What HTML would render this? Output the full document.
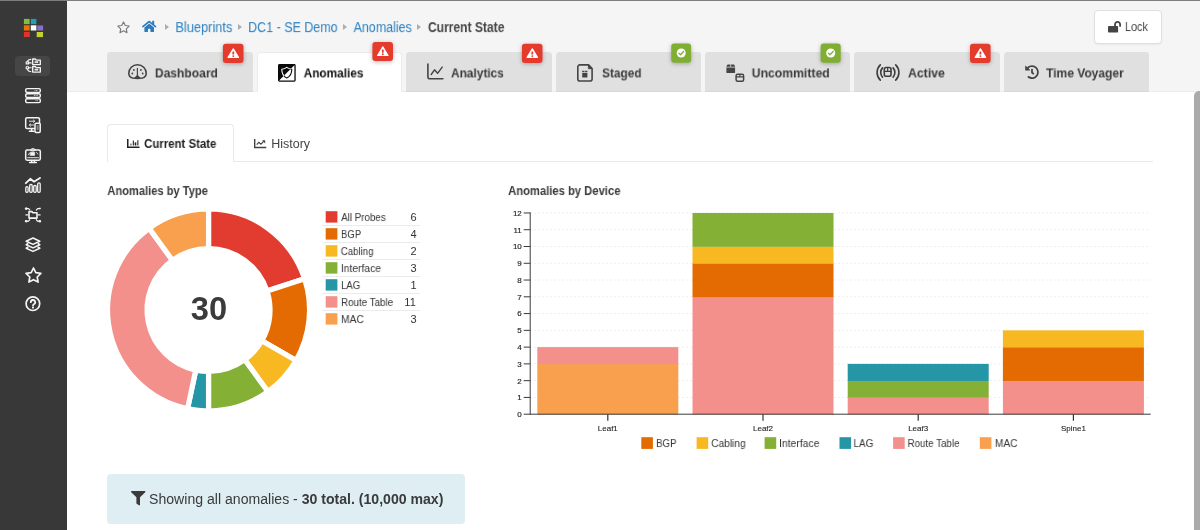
<!DOCTYPE html>
<html>
<head>
<meta charset="utf-8">
<title>Anomalies</title>
<style>
*{box-sizing:border-box;margin:0;padding:0}
html,body{width:1200px;height:530px;overflow:hidden;background:#fff;font-family:"Liberation Sans",sans-serif;color:#444}
.abs{position:absolute}
svg{position:absolute;overflow:visible;will-change:transform}
#topline{left:0;top:0;width:1200px;height:1px;background:#7e7e7e;z-index:50}
#side{left:0;top:0;width:67px;height:530px;background:#383838}
#head{left:67px;top:0;width:1133px;height:92px;background:#f5f5f5;border-bottom:1px solid #ebebeb}
#main{left:67px;top:92px;width:1133px;height:438px;background:#fff}
#scroll{left:1194.100px;top:91.4px;width:6px;height:438.6px;background:#ababab;border-top-left-radius:5px}
.t{position:absolute;white-space:nowrap;line-height:1;will-change:transform}
.bcarrow{position:absolute;top:24px;width:0;height:0;border-left:4px solid #adadad;border-top:3.5px solid transparent;border-bottom:3.5px solid transparent}
.tab{position:absolute;top:51.7px;height:40.3px;border-bottom:1px solid #d8d8d8;width:145.3px;background:#e0e0e0;border-radius:3.5px 3.5px 0 0}
.tab.active{background:#fff;height:40.3px;border:1px solid #ebebeb;border-bottom:none}
.badge{position:absolute;top:43.6px;width:20.7px;height:19.3px;border-radius:3px;box-shadow:0 2px 4px rgba(0,0,0,.25)}
.badge.r{background:#e43b2d}
.badge.g{background:#7fae33}
#lock{left:1094px;top:10px;width:68px;height:34px;background:#fff;border:1px solid #e0e0e0;border-radius:4px;box-shadow:0 1px 2px rgba(0,0,0,.05)}
#subline{left:107px;top:161px;width:1046px;height:1px;background:#e9e9e9}
#subtab{left:107px;top:124px;width:127px;height:38px;background:#fff;border:1px solid #e9e9e9;border-bottom:none;border-radius:4px 4px 0 0}
.sw{position:absolute;width:11px;height:11px}
.lsep{position:absolute;left:322px;width:98px;height:1px;background:#ebebeb}
#info{left:107.300px;top:474.200px;width:357.700px;height:50px;background:#deeef2;border-radius:4px}
</style>
</head>
<body>
<div class="abs" id="side"></div>
<div class="abs" id="head"></div>
<div class="abs" id="main"></div>
<div class="abs" id="scroll"></div>
<div class="abs" id="topline"></div>

<!-- breadcrumb arrows -->
<i class="bcarrow" style="left:165px"></i>
<i class="bcarrow" style="left:238px"></i>
<i class="bcarrow" style="left:343px"></i>
<i class="bcarrow" style="left:417px"></i>

<div class="abs" id="lock"></div>

<!-- tabs -->
<div class="tab" style="left:107.3px;width:145.7px"></div>
<div class="tab active" style="left:257px;width:145.300px"></div>
<div class="tab" style="left:406.4px"></div>
<div class="tab" style="left:555.7px"></div>
<div class="tab" style="left:705px"></div>
<div class="tab" style="left:854.4px"></div>
<div class="tab" style="left:1003.7px"></div>
<svg style="left:0;top:0;filter:drop-shadow(0 1.5px 2px rgba(0,0,0,.28))" width="1200" height="80"><rect x="222.9" y="43.8" width="20.6" height="19.1" rx="3" fill="#e43b2d"/><rect x="372.4" y="42.0" width="20.6" height="19.1" rx="3" fill="#e43b2d"/><rect x="521.9" y="43.8" width="20.6" height="19.1" rx="3" fill="#e43b2d"/><rect x="671.2" y="43.6" width="19.9" height="19.1" rx="3" fill="#7fae33"/><rect x="820.6" y="43.6" width="20.1" height="19.1" rx="3" fill="#7fae33"/><rect x="970" y="43.8" width="20.6" height="19.1" rx="3" fill="#e43b2d"/></svg>

<!-- sub tabs -->
<div class="abs" id="subline"></div>
<div class="abs" id="subtab"></div>

<svg style="left:0;top:0" width="1200" height="530"><path d="M208.55,209.00A101.0,101.0 0 0 1 304.61,278.79L267.04,291.00A61.5,61.5 0 0 0 208.55,248.50Z" fill="#e23b30" stroke="#fff" stroke-width="5.2" stroke-linejoin="miter"/><path d="M304.61,278.79A101.0,101.0 0 0 1 296.02,360.50L261.81,340.75A61.5,61.5 0 0 0 267.04,291.00Z" fill="#e36b02" stroke="#fff" stroke-width="5.2" stroke-linejoin="miter"/><path d="M296.02,360.50A101.0,101.0 0 0 1 267.92,391.71L244.70,359.75A61.5,61.5 0 0 0 261.81,340.75Z" fill="#f8b822" stroke="#fff" stroke-width="5.2" stroke-linejoin="miter"/><path d="M267.92,391.71A101.0,101.0 0 0 1 208.55,411.00L208.55,371.50A61.5,61.5 0 0 0 244.70,359.75Z" fill="#84b036" stroke="#fff" stroke-width="5.2" stroke-linejoin="miter"/><path d="M208.55,411.00A101.0,101.0 0 0 1 187.55,408.79L195.76,370.16A61.5,61.5 0 0 0 208.55,371.50Z" fill="#2596a5" stroke="#fff" stroke-width="5.2" stroke-linejoin="miter"/><path d="M187.55,408.79A101.0,101.0 0 0 1 149.18,228.29L172.40,260.25A61.5,61.5 0 0 0 195.76,370.16Z" fill="#f3908b" stroke="#fff" stroke-width="5.2" stroke-linejoin="miter"/><path d="M149.18,228.29A101.0,101.0 0 0 1 208.55,209.00L208.55,248.50A61.5,61.5 0 0 0 172.40,260.25Z" fill="#f9a04f" stroke="#fff" stroke-width="5.2" stroke-linejoin="miter"/></svg>
<svg style="left:0;top:0" width="1200" height="530"><rect x="325.7" y="211.2" width="11.7" height="11.4" fill="#e23b30"/><rect x="325.7" y="228.2" width="11.7" height="11.4" fill="#e36b02"/><rect x="325.7" y="245.2" width="11.7" height="11.4" fill="#f8b822"/><rect x="325.7" y="262.2" width="11.7" height="11.4" fill="#84b036"/><rect x="325.7" y="279.2" width="11.7" height="11.4" fill="#2596a5"/><rect x="325.7" y="296.2" width="11.7" height="11.4" fill="#f3908b"/><rect x="325.7" y="313.2" width="11.7" height="11.4" fill="#f9a04f"/></svg><div class="lsep" style="top:225px"></div><div class="lsep" style="top:242px"></div><div class="lsep" style="top:259px"></div><div class="lsep" style="top:276px"></div><div class="lsep" style="top:293px"></div><div class="lsep" style="top:310px"></div>
<svg style="left:0;top:0" width="1200" height="530" font-family="Liberation Sans, sans-serif" font-size="8" fill="#222" stroke="#222" stroke-width="0"><line x1="530.2" x2="1150.5" y1="397.43" y2="397.43" stroke="#eeeeee" stroke-width="1" stroke-dasharray="2,2"/><line x1="530.2" x2="1150.5" y1="380.66" y2="380.66" stroke="#eeeeee" stroke-width="1" stroke-dasharray="2,2"/><line x1="530.2" x2="1150.5" y1="363.89" y2="363.89" stroke="#eeeeee" stroke-width="1" stroke-dasharray="2,2"/><line x1="530.2" x2="1150.5" y1="347.12" y2="347.12" stroke="#eeeeee" stroke-width="1" stroke-dasharray="2,2"/><line x1="530.2" x2="1150.5" y1="330.35" y2="330.35" stroke="#eeeeee" stroke-width="1" stroke-dasharray="2,2"/><line x1="530.2" x2="1150.5" y1="313.58" y2="313.58" stroke="#eeeeee" stroke-width="1" stroke-dasharray="2,2"/><line x1="530.2" x2="1150.5" y1="296.81" y2="296.81" stroke="#eeeeee" stroke-width="1" stroke-dasharray="2,2"/><line x1="530.2" x2="1150.5" y1="280.04" y2="280.04" stroke="#eeeeee" stroke-width="1" stroke-dasharray="2,2"/><line x1="530.2" x2="1150.5" y1="263.27" y2="263.27" stroke="#eeeeee" stroke-width="1" stroke-dasharray="2,2"/><line x1="530.2" x2="1150.5" y1="246.50" y2="246.50" stroke="#eeeeee" stroke-width="1" stroke-dasharray="2,2"/><line x1="530.2" x2="1150.5" y1="229.73" y2="229.73" stroke="#eeeeee" stroke-width="1" stroke-dasharray="2,2"/><line x1="530.2" x2="1150.5" y1="212.96" y2="212.96" stroke="#eeeeee" stroke-width="1" stroke-dasharray="2,2"/><rect x="537.30" y="363.89" width="141" height="50.61" fill="#f9a04f"/><rect x="537.30" y="347.12" width="141" height="17.07" fill="#f3908b"/><line x1="607.80" x2="607.80" y1="414.2" y2="420.7" stroke="#333" stroke-width="1.2"/><text x="607.80" y="430.7" text-anchor="middle" stroke-width=".1">Leaf1</text><rect x="692.50" y="296.81" width="141" height="117.69" fill="#f3908b"/><rect x="692.50" y="263.27" width="141" height="33.84" fill="#e36b02"/><rect x="692.50" y="246.50" width="141" height="17.07" fill="#f8b822"/><rect x="692.50" y="212.96" width="141" height="33.84" fill="#84b036"/><line x1="763.00" x2="763.00" y1="414.2" y2="420.7" stroke="#333" stroke-width="1.2"/><text x="763.00" y="430.7" text-anchor="middle" stroke-width=".1">Leaf2</text><rect x="847.70" y="397.43" width="141" height="17.07" fill="#f3908b"/><rect x="847.70" y="380.66" width="141" height="17.07" fill="#84b036"/><rect x="847.70" y="363.89" width="141" height="17.07" fill="#2596a5"/><line x1="918.20" x2="918.20" y1="414.2" y2="420.7" stroke="#333" stroke-width="1.2"/><text x="918.20" y="430.7" text-anchor="middle" stroke-width=".1">Leaf3</text><rect x="1002.90" y="380.66" width="141" height="33.84" fill="#f3908b"/><rect x="1002.90" y="347.12" width="141" height="33.84" fill="#e36b02"/><rect x="1002.90" y="330.35" width="141" height="17.07" fill="#f8b822"/><line x1="1073.40" x2="1073.40" y1="414.2" y2="420.7" stroke="#333" stroke-width="1.2"/><text x="1073.40" y="430.7" text-anchor="middle" stroke-width=".1">Spine1</text><line x1="530.2" x2="530.2" y1="212.46" y2="414.7" stroke="#3a3a3a" stroke-width="1"/><line x1="523.7" x2="1150.7" y1="414.2" y2="414.2" stroke="#3a3a3a" stroke-width="1"/><text x="521.8000000000001" y="417.10" text-anchor="end" stroke-width=".15">0</text><line x1="523.7" x2="530.2" y1="397.43" y2="397.43" stroke="#3a3a3a" stroke-width="1"/><text x="521.8000000000001" y="400.33" text-anchor="end" stroke-width=".15">1</text><line x1="523.7" x2="530.2" y1="380.66" y2="380.66" stroke="#3a3a3a" stroke-width="1"/><text x="521.8000000000001" y="383.56" text-anchor="end" stroke-width=".15">2</text><line x1="523.7" x2="530.2" y1="363.89" y2="363.89" stroke="#3a3a3a" stroke-width="1"/><text x="521.8000000000001" y="366.79" text-anchor="end" stroke-width=".15">3</text><line x1="523.7" x2="530.2" y1="347.12" y2="347.12" stroke="#3a3a3a" stroke-width="1"/><text x="521.8000000000001" y="350.02" text-anchor="end" stroke-width=".15">4</text><line x1="523.7" x2="530.2" y1="330.35" y2="330.35" stroke="#3a3a3a" stroke-width="1"/><text x="521.8000000000001" y="333.25" text-anchor="end" stroke-width=".15">5</text><line x1="523.7" x2="530.2" y1="313.58" y2="313.58" stroke="#3a3a3a" stroke-width="1"/><text x="521.8000000000001" y="316.48" text-anchor="end" stroke-width=".15">6</text><line x1="523.7" x2="530.2" y1="296.81" y2="296.81" stroke="#3a3a3a" stroke-width="1"/><text x="521.8000000000001" y="299.71" text-anchor="end" stroke-width=".15">7</text><line x1="523.7" x2="530.2" y1="280.04" y2="280.04" stroke="#3a3a3a" stroke-width="1"/><text x="521.8000000000001" y="282.94" text-anchor="end" stroke-width=".15">8</text><line x1="523.7" x2="530.2" y1="263.27" y2="263.27" stroke="#3a3a3a" stroke-width="1"/><text x="521.8000000000001" y="266.17" text-anchor="end" stroke-width=".15">9</text><line x1="523.7" x2="530.2" y1="246.50" y2="246.50" stroke="#3a3a3a" stroke-width="1"/><text x="521.8000000000001" y="249.40" text-anchor="end" stroke-width=".15">10</text><line x1="523.7" x2="530.2" y1="229.73" y2="229.73" stroke="#3a3a3a" stroke-width="1"/><text x="521.8000000000001" y="232.63" text-anchor="end" stroke-width=".15">11</text><line x1="523.7" x2="530.2" y1="212.96" y2="212.96" stroke="#3a3a3a" stroke-width="1"/><text x="521.8000000000001" y="215.86" text-anchor="end" stroke-width=".15">12</text></svg><svg style="left:0;top:0" width="1200" height="530"><rect x="641.3" y="437.2" width="11.6" height="11.7" fill="#e36b02"/><rect x="696.6" y="437.2" width="11.6" height="11.7" fill="#f8b822"/><rect x="764.6" y="437.2" width="11.6" height="11.7" fill="#84b036"/><rect x="839.5" y="437.2" width="11.6" height="11.7" fill="#2596a5"/><rect x="893.1" y="437.2" width="11.6" height="11.7" fill="#f3908b"/><rect x="979.8" y="437.2" width="11.6" height="11.7" fill="#f9a04f"/></svg>

<div class="abs" id="info"></div>

<!-- logo -->
<svg style="left:0;top:0" width="67" height="50">
<rect x="23.9" y="18.9" width="5.7" height="5.2" fill="#84bd3a"/>
<rect x="30.8" y="18.9" width="5.6" height="5.2" fill="#219fb5"/>
<rect x="23.9" y="25.3" width="5.7" height="5.2" fill="#ef7102"/>
<rect x="30.8" y="25.3" width="5.6" height="5.2" fill="#ffffff"/>
<rect x="37.3" y="25.5" width="5.8" height="5" fill="#8b6fc6"/>
<rect x="23.9" y="32" width="5.9" height="5" fill="#e0332b"/>
<rect x="36.7" y="32" width="6.3" height="5.1" fill="#c2d32e"/>
</svg>
<div class="abs" style="left:15px;top:56px;width:35px;height:20px;border-radius:4px;background:#464646"></div>
<!-- side 1: blueprints -->
<svg style="left:25px;top:58.2px" width="16" height="16" fill="none" stroke="#f4f4f4" stroke-width="1.35" stroke-linejoin="round" stroke-linecap="round">
<path d="M7.700 1h2.500l1 1.100h4.100v4.500H7.700z"/><rect x="10.200" y="3.600" width="2.800" height="1.100" fill="#f4f4f4" stroke-width=".6"/>
<path d="M7.700 8.500h2.500l1 1.100h4.100v4.500H7.700z"/><rect x="10.200" y="11.100" width="2.800" height="1.100" fill="#f4f4f4" stroke-width=".6"/>
<rect x="1.200" y="3.900" width="2.400" height="2" stroke-width="1.100"/><rect x="1.200" y="8.700" width="2.400" height="2" stroke-width="1.100"/>
<path d="M5.900 1.400Q3 1.700 2.400 3.300M5.900 13.800Q3 13.500 2.400 11.500M4.100 4.900h2.100M4.100 9.700h2.100" stroke-width="1.100"/>
</svg>
<!-- side 2: servers -->
<svg style="left:25px;top:88px" width="16" height="16" fill="none" stroke="#f4f4f4" stroke-width="1.45">
<rect x=".7" y=".6" width="14.6" height="3.8" rx="1.4"/><rect x=".7" y="5.7" width="14.6" height="3.8" rx="1.4"/><rect x=".7" y="10.8" width="14.6" height="3.8" rx="1.4"/>
<path d="M9.5 2.5h3.5M9 7.6h4M10.5 12.7h2.5" stroke-width=".8" stroke-dasharray="1,.6"/>
</svg>
<!-- side 3: monitor+phone -->
<svg style="left:25px;top:117.400px" width="16" height="16" fill="none" stroke="#f4f4f4" stroke-width="1.500" stroke-linejoin="round" stroke-linecap="round">
<rect x=".7" y=".7" width="13.800" height="10.900" rx="1.400"/><path d="M6.600 12v2M4.400 14.200h4.400"/>
<path d="M4.400 4.200h5.200M8.400 3l1.300 1.200-1.300 1.200M8.600 8h-4.200M5.600 6.800l-1.300 1.200 1.300 1.200" stroke-width=".9"/>
<rect x="10" y="6.200" width="5.200" height="9.200" rx="1.100" fill="#383838"/><rect x="11.600" y="8.100" width="2" height="4.800" fill="#8a8a8a" stroke="none"/>
</svg>
<!-- side 4: monitor -->
<svg style="left:25px;top:147.600px" width="16" height="16" fill="none" stroke="#f4f4f4" stroke-width="1.500" stroke-linejoin="round" stroke-linecap="round">
<rect x=".7" y="2" width="14.600" height="10.200" rx="1.400"/><path d="M2.600 9.700h10.800" stroke-width=".9"/><path d="M6.600 12.400v1.800M9.400 12.400v1.800M4.600 14.500h6.800"/>
<ellipse cx="8" cy="1.800" rx="2.200" ry="1.200" stroke-width="1"/><rect x="5.300" y="4.200" width="4.400" height="3.200" fill="#f4f4f4" stroke-width=".6"/><path d="M11.600 4.400l1.200 1.700M3.300 6.900l1-1.600" stroke-width=".8"/>
</svg>
<!-- side 5: analytics -->
<svg style="left:25px;top:177.3px" width="16" height="16" fill="none" stroke="#f4f4f4" stroke-width="1.4" stroke-linejoin="round" stroke-linecap="round">
<path d="M.8 6.200L5.300 1.800 9 4.700 15 .9" stroke-width="1.800"/>
<rect x=".8" y="9.600" width="2.300" height="5.700" rx="1.100" stroke-width="1.300"/><rect x="4.700" y="7.500" width="2.500" height="7.800" rx="1.100" stroke-width="1.300"/><rect x="8.700" y="8.500" width="2.500" height="6.800" rx="1.100" stroke-width="1.300"/><rect x="12.700" y="5.900" width="2.500" height="9.400" rx="1.100" stroke-width="1.300"/>
</svg>
<!-- side 6: folder arrows -->
<svg style="left:25px;top:207.2px" width="16" height="16" fill="none" stroke="#f4f4f4" stroke-width="1.200" stroke-linejoin="round" stroke-linecap="round">
<path d="M4 4.600h2.900l1 1.100h4.100v5.400H4z" stroke-width="1.600"/>
<path d="M1 1.600h2.600l1.200 1.300M15 1.600h-2.400l-1.300 1.500M.9 7.900h1.800M15.100 7.900h-1.800M1 14.200h2.600l1.100-1.500M15 14.200h-2.600l-1.100-1.500" />
<circle cx="1.100" cy="1.600" r=".7" fill="#f4f4f4"/><circle cx="14.900" cy="1.400" r=".8" fill="#f4f4f4" stroke="none"/><circle cx="1.100" cy="14.200" r=".7" fill="#f4f4f4"/><circle cx="14.900" cy="14.200" r=".7" fill="#f4f4f4"/>
</svg>
<!-- side 7: layers -->
<svg style="left:25px;top:237px" width="16" height="16" fill="none" stroke="#f4f4f4" stroke-width="1.600" stroke-linejoin="round" stroke-linecap="round">
<path d="M8 1l6.800 3.200L8 7.400 1.200 4.200z"/><path d="M2.800 6.800L1.200 7.700 8 10.900l6.800-3.200-1.600-.9"/><path d="M2.800 10.300l-1.600.9L8 14.400l6.800-3.200-1.600-.9"/>
</svg>
<!-- side 8: star -->
<svg style="left:24.600px;top:267px" width="17" height="16" fill="none" stroke="#f4f4f4" stroke-width="1.700" stroke-linejoin="round">
<path d="M8.500 1l2.300 4.700 5.100.7-3.700 3.600.9 5.100-4.600-2.400-4.600 2.400.9-5.100L1.100 6.400l5.100-.7z"/>
</svg>
<!-- side 9: help -->
<svg style="left:25px;top:295.500px" width="16" height="16" fill="none" stroke="#f4f4f4" stroke-width="1.700">
<circle cx="7.900" cy="7.700" r="6.800"/>
<path d="M5.800 6.200a2.200 2.200 0 1 1 3.100 2c-.7.400-.9.700-.9 1.300" stroke-width="1.800" stroke-linecap="round"/><circle cx="8" cy="11.600" r="1.050" fill="#f4f4f4" stroke="none"/>
</svg>
<!-- breadcrumb star -->
<svg style="left:116.6px;top:21.4px" width="13" height="12.5" viewBox="0 0 13 12.5" fill="none" stroke="#7a7a7a" stroke-width="1.15" stroke-linejoin="round">
<path d="M6.5 .9l1.75 3.6 3.9.55-2.85 2.75.7 3.9L6.5 9.85 3 11.7l.7-3.9L.85 5.05l3.9-.55z"/>
</svg>
<!-- home -->
<svg style="left:141.7px;top:20.3px" width="14.4" height="12.8" viewBox="0 0 576 512" fill="#2b7bbd">
<path d="M280.37 148.26L96 300.11V464a16 16 0 0 0 16 16l112.06-.29a16 16 0 0 0 15.92-16V368a16 16 0 0 1 16-16h64a16 16 0 0 1 16 16v95.64a16 16 0 0 0 16 16.05L464 480a16 16 0 0 0 16-16V300L295.67 148.26a12.19 12.19 0 0 0-15.3 0zM571.6 251.47L488 182.56V44.05a12 12 0 0 0-12-12h-56a12 12 0 0 0-12 12v72.61L318.47 43a48 48 0 0 0-61 0L4.34 251.47a12 12 0 0 0-1.6 16.9l25.5 31A12 12 0 0 0 45.15 301l235.22-193.74a12.19 12.19 0 0 1 15.3 0L530.9 301a12 12 0 0 0 16.9-1.6l25.5-31a12 12 0 0 0-1.7-16.93z"/>
</svg>
<!-- lock open -->
<svg style="left:1108px;top:20.6px" width="13" height="11.55" viewBox="0 0 576 512" fill="#444">
<path d="M423.5 0C339.5.3 272 69.5 272 153.5V224H48c-26.5 0-48 21.5-48 48v192c0 26.5 21.500 48 48 48h352c26.5 0 48-21.5 48-48V272c0-26.5-21.5-48-48-48h-48v-71.1c0-39.6 31.7-72.5 71.3-72.9 40-.4 72.7 32.100 72.700 72v80c0 13.3 10.7 24 24 24h32c13.3 0 24-10.700 24-24v-80C576 68 507.5-.3 423.5 0z"/>
</svg>
<!-- tab1: dashboard gauge -->
<svg style="left:128.2px;top:63.9px" width="19" height="15" viewBox="0 0 19 15" fill="none" stroke="#444" stroke-width="1.6" stroke-linejoin="round">
<path d="M4.500 14C2.500 13.500.8 12 .8 9.300C.8 4.500 4.500.8 9.500.8S18.200 4.500 18.200 9.300C18.200 12 16.500 13.500 14.500 14C11.500 14.500 7.500 14.500 4.500 14z"/>
<path d="M9.400 4.100v7" stroke-width="1.200"/><path d="M9.400 10.400l3.100 3.600H6.300z" fill="#444" stroke="none"/>
<circle cx="5.900" cy="6" r=".9" fill="#444" stroke="none"/><circle cx="12.900" cy="6" r=".9" fill="#444" stroke="none"/><circle cx="4.300" cy="9.500" r=".9" fill="#444" stroke="none"/><circle cx="14.700" cy="9.500" r=".9" fill="#444" stroke="none"/>
</svg>
<!-- tab2: anomalies -->
<svg style="left:277.8px;top:63.8px" width="17.7" height="17.7" viewBox="0 0 17.700 17.700">
<defs><clipPath id="cA"><path d="M0 0H17.700L0 17.700z"/></clipPath><clipPath id="cB"><path d="M17.700 0V17.700H0z"/></clipPath></defs>
<rect x=".65" y=".65" width="16.400" height="16.400" rx=".8" fill="#fff" stroke="#0a0a0a" stroke-width="1.300"/>
<path d="M.6.600H17.100L.6 17.100z" fill="#0a0a0a"/>
<g fill="none" stroke-width="1.100" stroke-linejoin="round">
<path id="shp" clip-path="url(#cA)" stroke="#fff" d="M8.800 3.400c1.700 1.100 3.200 1.600 5 1.800 0 4.500-1.500 7.300-5 8.700-3.500-1.400-5-4.200-5-8.700 1.800-.2 3.300-.7 5-1.800z"/>
<path clip-path="url(#cB)" stroke="#0a0a0a" d="M8.800 3.400c1.700 1.100 3.200 1.600 5 1.800 0 4.500-1.500 7.300-5 8.700-3.500-1.400-5-4.200-5-8.700 1.800-.2 3.300-.7 5-1.800z"/>
</g>
</svg>
<!-- tab3: analytics -->
<svg style="left:427px;top:63px" width="17" height="17" viewBox="0 0 17 17" fill="none" stroke="#444" stroke-linecap="round" stroke-linejoin="round">
<path d="M.9 1v12.800a2 2 0 0 0 2 2H15.900" stroke-width="1.600"/>
<path d="M4.200 11.500l3.300-4.700 3.100 3.500 4.600-6.200" stroke-width="1.400"/>
</svg>
<!-- tab4: staged -->
<svg style="left:577.3px;top:63.8px" width="16" height="17.800" viewBox="0 0 16 17.800" fill="none" stroke="#444" stroke-width="1.600" stroke-linejoin="round">
<path d="M2.800.9h8.800l3.500 3.700v10.400a2 2 0 0 1-2 2H2.800a2 2 0 0 1-2-2V2.900a2 2 0 0 1 2-2z"/>
<path d="M11.400 1v3.700h3.600z" fill="#444" stroke-width=".8"/>
<path d="M5.200 6.700h2.300v1.400H5.200zM8.100 6.700h2.300v1.400H8.100zM5.200 8.800h5.200v4.100a.6.600 0 0 1-.6.600H5.800a.6.600 0 0 1-.6-.6z" fill="#444" stroke="none"/>
</svg>
<!-- tab5: uncommitted -->
<svg style="left:725.6px;top:63.6px" width="18.600" height="18" viewBox="0 0 18.600 18" fill="#444" stroke="none">
<path d="M.5 2.100L1.600.4h2.800v2.300H.5zM5.100.4h2.800l1.100 1.700v.6H5.100zM.4 3.500h8.700v4.700a.9.900 0 0 1-.9.900H1.300a.9.900 0 0 1-.9-.9z"/>
<rect x="10.100" y="10.200" width="7.500" height="7" rx="1.500" fill="none" stroke="#444" stroke-width="1.500"/>
<path d="M10.100 12.900h7.500M13.850 10.200v2.700" fill="none" stroke="#444" stroke-width="1.200"/>
</svg>
<!-- tab6: active -->
<svg style="left:875.5px;top:63.5px" width="25" height="17" viewBox="0 0 25 17" fill="none" stroke="#3d3d3d" stroke-width="1.600" stroke-linecap="round">
<path d="M4.300.9A10.600 10.600 0 0 0 4.300 16.100M19.700.9A10.600 10.600 0 0 1 19.700 16.100"/>
<path d="M6.500 3.900A6.800 6.800 0 0 0 6.500 13.100M17.100 3.900A6.800 6.800 0 0 1 17.100 13.100"/>
<rect x="8.300" y="3.500" width="6.700" height="8.800" rx="1.700"/>
<path d="M8.300 7.300h6.700M11.650 3.500v3.800" stroke-width="1.200"/>
</svg>
<!-- tab7: history -->
<svg style="left:1025.100px;top:65px" width="14" height="14.300" viewBox="0 0 512 512" fill="#444">
<path d="M504 255.531c.253 136.640-111.180 248.372-247.820 248.468-59.015.042-113.223-20.530-155.822-54.911-11.077-8.940-11.905-25.541-1.839-35.607l11.267-11.267c8.609-8.609 22.353-9.551 31.891-1.984C173.062 425.135 212.781 440 256 440c101.705 0 184-82.311 184-184 0-101.705-82.311-184-184-184-48.814 0-93.149 18.969-126.068 49.932l50.754 50.754c10.080 10.080 2.941 27.314-11.313 27.314H24c-8.837 0-16-7.163-16-16V38.627c0-14.254 17.234-21.393 27.314-11.314l49.372 49.372C129.209 34.136 189.552 8 256 8c136.810 0 247.747 110.780 248 247.531zm-180.912 78.784l9.823-12.630c8.138-10.463 6.253-25.542-4.210-33.679L288 256.349V152c0-13.255-10.745-24-24-24h-16c-13.255 0-24 10.745-24 24v135.651l65.409 50.874c10.463 8.137 25.541 6.253 33.679-4.210z"/>
</svg>
<!-- badge icons -->
<svg style="left:0;top:0" width="1200" height="70">
<g transform="translate(233.3,53.1)"><path d="M0 -4.300L5.200 4.300H-5.200z" fill="#fff" stroke="#fff" stroke-width="1.200" stroke-linejoin="round"/><rect x="-.9" y="-1.700" width="1.800" height="3.200" rx=".5" fill="#e43b2d"/><circle cx="0" cy="3" r=".95" fill="#e43b2d"/></g>
<g transform="translate(382.8,51.2)"><path d="M0 -4.300L5.200 4.300H-5.200z" fill="#fff" stroke="#fff" stroke-width="1.200" stroke-linejoin="round"/><rect x="-.9" y="-1.700" width="1.800" height="3.200" rx=".5" fill="#e43b2d"/><circle cx="0" cy="3" r=".95" fill="#e43b2d"/></g>
<g transform="translate(532.3,53.1)"><path d="M0 -4.300L5.200 4.300H-5.200z" fill="#fff" stroke="#fff" stroke-width="1.200" stroke-linejoin="round"/><rect x="-.9" y="-1.700" width="1.800" height="3.200" rx=".5" fill="#e43b2d"/><circle cx="0" cy="3" r=".95" fill="#e43b2d"/></g>
<g transform="translate(681.2,53.0)"><circle cx="0" cy="0" r="4.500" fill="#fff"/><path d="M-2.300.1L-.7 1.800 2.400-1.500" fill="none" stroke="#7fae33" stroke-width="1.300" stroke-linecap="round" stroke-linejoin="round"/></g>
<g transform="translate(830.7,53.0)"><circle cx="0" cy="0" r="4.500" fill="#fff"/><path d="M-2.300.1L-.7 1.800 2.400-1.500" fill="none" stroke="#7fae33" stroke-width="1.300" stroke-linecap="round" stroke-linejoin="round"/></g>
<g transform="translate(980.4,53.1)"><path d="M0 -4.300L5.200 4.300H-5.200z" fill="#fff" stroke="#fff" stroke-width="1.200" stroke-linejoin="round"/><rect x="-.9" y="-1.700" width="1.800" height="3.200" rx=".5" fill="#e43b2d"/><circle cx="0" cy="3" r=".95" fill="#e43b2d"/></g>
</svg>
<!-- subtab icons -->
<svg style="left:126.500px;top:138.700px" width="12.500" height="9" viewBox="0 0 12.500 9" fill="#222">
<path d="M0 0h1.500v7.500h11v1.500H0z"/><rect x="3.500" y="4.600" width=".9" height="1.900"/><rect x="5.800" y="1.600" width="1.100" height="4.900"/><rect x="7.700" y="3.400" width="1.600" height="3.100"/><rect x="10.300" y="1.200" width="1.100" height="5.300"/>
</svg>
<svg style="left:253.700px;top:138.700px" width="12.500" height="9.300" viewBox="0 0 12.500 9.300" fill="#444">
<path d="M0 0h1.400v7.800h10.900v1.500H0z"/><path d="M2.700 5.600l2.200-2.200 2 1.800 2.800-2.800" fill="none" stroke="#444" stroke-width="1.200"/><path d="M8 1.200h3.200v3.200z"/>
</svg>
<!-- filter -->
<svg style="left:130.700px;top:491px" width="14.400" height="14.400" viewBox="0 0 512 512" fill="#3a3a3a">
<path d="M487.976 0H24.028C2.710 0-8.047 25.866 7.058 40.971L192 225.941V432c0 7.831 3.821 15.170 10.237 19.662l80 55.980C298.020 518.690 320 507.493 320 487.980V225.941l184.947-184.970C520.021 25.896 509.338 0 487.976 0z"/>
</svg>

<span class="t" id="bc1" style="left:175px;top:20px;font-size:14px;font-weight:normal;color:#2a7fc0;transform:translate(0.37px,0.07px) scaleX(0.9155);transform-origin:0 0;">Blueprints</span>
<span class="t" id="bc2" style="left:248px;top:20px;font-size:14px;font-weight:normal;color:#2a7fc0;transform:translate(0.10px,0.07px) scaleX(0.8923);transform-origin:0 0;">DC1 - SE Demo</span>
<span class="t" id="bc3" style="left:353px;top:20px;font-size:14px;font-weight:normal;color:#2a7fc0;transform:translate(0.60px,0.07px) scaleX(0.8909);transform-origin:0 0;">Anomalies</span>
<span class="t" id="bc4" style="left:427px;top:20px;font-size:14px;font-weight:bold;color:#444;transform:translate(0.96px,0.07px) scaleX(0.8616);transform-origin:0 0;">Current State</span>
<span class="t" id="lockt" style="left:1124px;top:21px;font-size:12px;font-weight:normal;color:#444;transform:translate(0.89px,0.03px) scaleX(0.9108);transform-origin:0 0;">Lock</span>
<span class="t" id="tt1" style="left:154px;top:66px;font-size:13px;font-weight:bold;color:#3a3a3a;transform:translate(0.89px,0.40px) scaleX(0.9270);transform-origin:0 0;">Dashboard</span>
<span class="t" id="tt2" style="left:303px;top:66px;font-size:13px;font-weight:bold;color:#111;transform:translate(0.66px,0.40px) scaleX(0.9094);transform-origin:0 0;">Anomalies</span>
<span class="t" id="tt3" style="left:450px;top:66px;font-size:13px;font-weight:bold;color:#3a3a3a;transform:translate(0.96px,0.40px) scaleX(0.9143);transform-origin:0 0;">Analytics</span>
<span class="t" id="tt4" style="left:602px;top:66px;font-size:13px;font-weight:bold;color:#3a3a3a;transform:translate(0.06px,0.40px) scaleX(0.9092);transform-origin:0 0;">Staged</span>
<span class="t" id="tt5" style="left:751px;top:66px;font-size:13px;font-weight:bold;color:#3a3a3a;transform:translate(0.70px,0.40px) scaleX(0.9399);transform-origin:0 0;">Uncommitted</span>
<span class="t" id="tt6" style="left:907px;top:66px;font-size:13px;font-weight:bold;color:#3a3a3a;transform:translate(0.94px,0.40px) scaleX(0.9469);transform-origin:0 0;">Active</span>
<span class="t" id="tt7" style="left:1046px;top:66px;font-size:13px;font-weight:bold;color:#3a3a3a;transform:translate(0.08px,0.40px) scaleX(0.9242);transform-origin:0 0;">Time Voyager</span>
<span class="t" id="st1" style="left:144px;top:137px;font-size:12px;font-weight:bold;color:#222;transform:translate(0.12px,0.93px) scaleX(0.9504);transform-origin:0 0;">Current State</span>
<span class="t" id="st2" style="left:271px;top:137px;font-size:12px;font-weight:normal;color:#444;transform:translate(0.36px,0.93px) scaleX(1.0372);transform-origin:0 0;">History</span>
<span class="t" id="h1" style="left:107px;top:185px;font-size:12px;font-weight:bold;color:#383838;transform:translate(0.35px,0.03px) scaleX(0.9271);transform-origin:0 0;">Anomalies by Type</span>
<span class="t" id="h2" style="left:508px;top:185px;font-size:12px;font-weight:bold;color:#383838;transform:translate(0.15px,0.03px) scaleX(0.9350);transform-origin:0 0;">Anomalies by Device</span>
<span class="t" id="n30" style="left:190px;top:293px;font-size:32.5px;font-weight:bold;color:#3b3b3b;transform:translate(0.75px,0.16px) scaleX(1.0051);transform-origin:0 0;">30</span>
<span class="t" id="inf1" style="left:149px;top:491px;font-size:14px;font-weight:normal;color:#3a3a3a;transform:translate(0.07px,0.57px) scaleX(1.0057);transform-origin:0 0;">Showing all anomalies - <b>30 total. (10,000 max)</b></span>
<span class="t" id="lg0" style="left:341px;top:212px;font-size:11px;font-weight:normal;color:#333;transform:translate(0.20px,0.06px) scaleX(0.8864);transform-origin:0 0;">All Probes</span>
<span class="t" id="lv0" style="left:410px;top:212px;font-size:11px;font-weight:normal;color:#333;transform:translate(0.48px,0.06px) scaleX(1.0000);transform-origin:0 0;">6</span>
<span class="t" id="lg1" style="left:341px;top:229px;font-size:11px;font-weight:normal;color:#333;transform:translate(0.04px,0.06px) scaleX(0.8644);transform-origin:0 0;">BGP</span>
<span class="t" id="lv1" style="left:410px;top:229px;font-size:11px;font-weight:normal;color:#333;transform:translate(0.48px,0.06px) scaleX(1.0000);transform-origin:0 0;">4</span>
<span class="t" id="lg2" style="left:340px;top:246px;font-size:11px;font-weight:normal;color:#333;transform:translate(0.76px,0.06px) scaleX(0.8775);transform-origin:0 0;">Cabling</span>
<span class="t" id="lv2" style="left:410px;top:246px;font-size:11px;font-weight:normal;color:#333;transform:translate(0.48px,0.06px) scaleX(1.0000);transform-origin:0 0;">2</span>
<span class="t" id="lg3" style="left:340px;top:263px;font-size:11px;font-weight:normal;color:#333;transform:translate(0.86px,0.06px) scaleX(0.9378);transform-origin:0 0;">Interface</span>
<span class="t" id="lv3" style="left:410px;top:263px;font-size:11px;font-weight:normal;color:#333;transform:translate(0.48px,0.06px) scaleX(1.0000);transform-origin:0 0;">3</span>
<span class="t" id="lg4" style="left:341px;top:280px;font-size:11px;font-weight:normal;color:#333;transform:translate(0.04px,0.06px) scaleX(0.8736);transform-origin:0 0;">LAG</span>
<span class="t" id="lv4" style="left:410px;top:280px;font-size:11px;font-weight:normal;color:#333;transform:translate(0.48px,0.06px) scaleX(1.0000);transform-origin:0 0;">1</span>
<span class="t" id="lg5" style="left:341px;top:297px;font-size:11px;font-weight:normal;color:#333;transform:translate(0.02px,0.06px) scaleX(0.8893);transform-origin:0 0;">Route Table</span>
<span class="t" id="lv5" style="left:404px;top:297px;font-size:11px;font-weight:normal;color:#333;transform:translate(0.36px,0.06px) scaleX(1.0000);transform-origin:0 0;">11</span>
<span class="t" id="lg6" style="left:340px;top:314px;font-size:11px;font-weight:normal;color:#333;transform:translate(0.98px,0.06px) scaleX(0.9341);transform-origin:0 0;">MAC</span>
<span class="t" id="lv6" style="left:410px;top:314px;font-size:11px;font-weight:normal;color:#333;transform:translate(0.48px,0.06px) scaleX(1.0000);transform-origin:0 0;">3</span>
<span class="t" id="bl0" style="left:656px;top:438px;font-size:11px;font-weight:normal;color:#333;transform:translate(0.24px,0.06px) scaleX(0.8690);transform-origin:0 0;">BGP</span>
<span class="t" id="bl1" style="left:711px;top:438px;font-size:11px;font-weight:normal;color:#333;transform:translate(0.24px,0.06px) scaleX(0.9218);transform-origin:0 0;">Cabling</span>
<span class="t" id="bl2" style="left:779px;top:438px;font-size:11px;font-weight:normal;color:#333;transform:translate(0.06px,0.06px) scaleX(0.9426);transform-origin:0 0;">Interface</span>
<span class="t" id="bl3" style="left:853px;top:438px;font-size:11px;font-weight:normal;color:#333;transform:translate(0.51px,0.06px) scaleX(0.9031);transform-origin:0 0;">LAG</span>
<span class="t" id="bl4" style="left:907px;top:438px;font-size:11px;font-weight:normal;color:#333;transform:translate(0.52px,0.06px) scaleX(0.8875);transform-origin:0 0;">Route Table</span>
<span class="t" id="bl5" style="left:994px;top:438px;font-size:11px;font-weight:normal;color:#333;transform:translate(0.89px,0.06px) scaleX(0.9254);transform-origin:0 0;">MAC</span>
</body>
</html>
